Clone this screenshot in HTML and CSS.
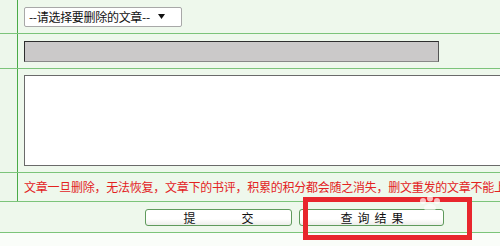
FILE: index.html
```html
<!DOCTYPE html>
<html lang="zh">
<head>
<meta charset="utf-8">
<link rel="stylesheet" href="styles.css">
</head>
<body>
<div class="page">
  <div class="form">
    <div class="row r1">
      <div class="side"></div>
      <div class="cell">
        <div class="select"><span class="sel-text">--请选择要删除的文章--</span><svg class="arrow" width="7" height="5" viewBox="0 0 7 5"><path d="M0 0H7L3.5 5Z" fill="#111"/></svg></div>
      </div>
    </div>
    <div class="row r2">
      <div class="side"></div>
      <div class="cell"><div class="input"></div></div>
    </div>
    <div class="row r3">
      <div class="side"></div>
      <div class="cell"><div class="textarea"></div></div>
    </div>
    <div class="row r4">
      <div class="side"></div>
      <div class="cell"><p class="warn">文章一旦删除，无法恢复，文章下的书评，积累的积分都会随之消失，删文重发的文章不能上传到同一位置。</p></div>
    </div>
    <div class="row r5">
      <div class="buttons">
        <div class="btn btn-submit"><span>提</span><span>交</span></div>
        <div class="btn btn-query"><span>查</span><span>询</span><span>结</span><span>果</span></div>
      </div>
    </div>
  </div>
  <div class="mark"></div>
  <svg class="paw" width="30" height="18" viewBox="0 0 30 18">
    <circle cx="8" cy="6" r="3" fill="#fff" opacity="0.7"/>
    <circle cx="15" cy="3.5" r="3" fill="#fff" opacity="0.7"/>
    <circle cx="22" cy="6" r="3" fill="#fff" opacity="0.7"/>
    <ellipse cx="15" cy="13" rx="6" ry="4" fill="#fff" opacity="0.6"/>
  </svg>
</div>
</body>
</html>
```
FILE: styles.css
```css
* { box-sizing: border-box; }
html, body {
  margin: 0;
  padding: 0;
}
body {
  width: 500px;
  height: 246px;
  overflow: hidden;
  background: #fafdf9;
  font-family: "Noto Sans CJK SC", "Liberation Sans", sans-serif;
  font-size: 12px;
}
.page {
  position: relative;
  width: 500px;
  height: 246px;
}
.form {
  background: #eef8ec;
}
.row {
  display: grid;
  grid-template-columns: 18px 1fr;
  border-bottom: 1px solid #7cc47a;
  overflow: hidden;
}
.side {
  border-right: 1px solid #4aab48;
  background: #edf7eb;
}
.cell {
  display: flex;
  align-items: center;
  padding-left: 6px;
  min-width: 0;
}
.r1 { height: 34px; }
.r2 { height: 35px; }
.r3 { height: 104px; }
.r4 { height: 29px; }
.r5 {
  height: 31px;
  display: flex;
  align-items: center;
}
.select {
  width: 158px;
  height: 20px;
  background: #fff;
  border: 1px solid #a8a8a8;
  border-radius: 2px;
  display: flex;
  align-items: center;
  padding-left: 4px;
  color: #111;
  font-size: 12px;
  line-height: 18px;
}
.sel-text {
  letter-spacing: -0.3px;
}
.arrow {
  margin-left: 8px;
}
.input {
  width: 415px;
  height: 21px;
  background: #cbc9c9;
  border-top: 1px solid #2e2e2e;
  border-left: 1px solid #2e2e2e;
  border-right: 1px solid #555;
  border-bottom: 1px solid #888;
}
.textarea {
  flex: none;
  width: 500px;
  height: 91px;
  background: #fff;
  border: 1px solid #6a6a6a;
  border-right: none;
}
.warn {
  margin: 0;
  color: #e3231f;
  font-size: 12px;
  letter-spacing: -0.25px;
  white-space: nowrap;
  line-height: 16px;
}
.buttons {
  display: flex;
  gap: 7px;
  padding-left: 145px;
}
.btn {
  height: 17px;
  display: flex;
  justify-content: center;
  align-items: center;
  background: linear-gradient(#ffffff, #ffffff 60%, #eceeea);
  border: 1px solid #5f9a5c;
  border-radius: 3px;
  color: #111;
  font-size: 12px;
  line-height: 15px;
}
.btn-submit {
  width: 147px;
  gap: 46px;
}
.btn-query {
  width: 145px;
  gap: 5px;
  padding-left: 1px;
}
.mark {
  position: absolute;
  left: 303px;
  top: 197px;
  width: 169px;
  height: 43px;
  border: 5px solid #e8262d;
}
.paw {
  position: absolute;
  left: 415px;
  top: 195px;
}
```
